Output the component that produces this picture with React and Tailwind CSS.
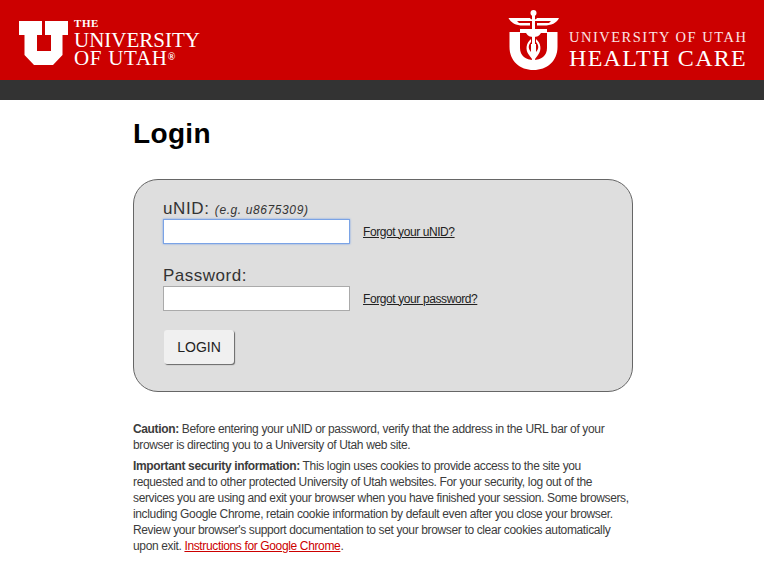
export default function App() {
  return (
    <div className="min-h-[571px] bg-white font-['Liberation_Sans',Arial,sans-serif] text-[#333]">
      <header className="h-[80px] bg-[#cc0000] flex items-start justify-between text-white font-['Liberation_Serif',serif]">
        <div className="flex pl-[19px] pt-[20px]">
          <svg width="49" height="45" viewBox="0 0 49 45" fill="#fff" className="block">
            <path d="M0 1H23V15H18V31H32V15H26V1H49V15H43.5V35L34 45H15L5.5 35V15H0Z" />
          </svg>
          <div className="ml-[6px] -mt-[3px]">
            <div className="text-[11px] leading-[12px] font-bold tracking-[0.6px]">THE</div>
            <div className="text-[21px] leading-[18px] mt-[2px] whitespace-nowrap">UNIVERSITY</div>
            <div className="text-[21px] leading-[18px] tracking-[0.7px] whitespace-nowrap">OF UTAH<span className="text-[10px] relative top-[-5px] leading-none font-bold">®</span></div>
          </div>
        </div>
        <div className="flex pr-[17px] pt-[10px]">
          <svg width="52" height="60" viewBox="0 0 52 60" fill="#fff" className="block">
            <circle cx="25.5" cy="3" r="3" />
            <path d="M0.5 8H22C23 10 28 10 29 8H51C49 13 43 15.5 36 15.5H29V13H41L43 11H9L11 13H22V15.5H15C8 15.5 3 13 0.5 8Z" />
            <path d="M24 5H27V52H24Z" />
            <path d="M1.5 22H12V38C12 46 18 50 25.5 50S39 46 39 38V22H49.5V37C49.5 51 39 60 25.5 60S1.5 51 1.5 37Z" />
            <path d="M12 19H39V23H33C31 26 29 27 25.5 27S20 26 18 23H12Z" />
            <path d="M23 29C18 33 17 40 21 45L25.5 51L30 45C34 40 33 33 28 29V32C31 35 31 39 28 42V34H23V42C20 39 20 35 23 32Z" />
          </svg>
          <div className="ml-[9px] pt-[20px] w-[178px]">
            <div className="text-[14.5px] leading-[15px] tracking-[1.5px] whitespace-nowrap text-[#fbe5e5]">UNIVERSITY OF UTAH</div>
            <div className="text-[24px] leading-[24px] tracking-[1.3px] whitespace-nowrap mt-[1px]">HEALTH CARE</div>
          </div>
        </div>
      </header>
      <div className="h-[20px] bg-[#333]" />
      <main className="w-[500px] ml-[133px]">
        <h1 className="text-[28px] leading-[32px] font-bold text-black pt-[18px] tracking-[0.35px]">Login</h1>
        <form className="mt-[29px] h-[213px] rounded-[25px] border border-[#666] bg-[#dedede] pl-[29px] pt-[20px]">
          <label className="block text-[17px] leading-[18px] tracking-[0.6px] text-[#333]">
            uNID: <em className="text-[12px] tracking-[0.6px]">(e.g. u8675309)</em>
          </label>
          <div className="flex items-center">
            <div className="w-[187px] h-[25px] bg-white border border-[#7aa3e6] shadow-[0_0_2px_#7aa3e6]" />
            <a className="ml-[13px] text-[12px] leading-[14px] underline tracking-[-0.42px] text-[#222]">Forgot your uNID?</a>
          </div>
          <label className="block mt-[21px] text-[17px] leading-[21px] tracking-[0.5px] text-[#333]">Password:</label>
          <div className="flex items-center">
            <div className="w-[187px] h-[25px] bg-white border border-[#aaa]" />
            <a className="ml-[13px] text-[12px] leading-[14px] underline tracking-[-0.4px] text-[#222]">Forgot your password?</a>
          </div>
          <button type="button" className="block ml-[1px] mt-[19px] w-[70px] h-[34px] rounded-[3px] bg-[#f0f0f0] text-[14px] text-[#222] shadow-[1px_1px_1px_#666]">LOGIN</button>
        </form>
        <div className="mt-[29px] text-[12px] leading-[16px] tracking-[-0.36px] text-[#3c3c3c]">
          <p><strong>Caution:</strong> Before entering your uNID or password, verify that the address in the URL bar of your browser is directing you to a University of Utah web site.</p>
          <p className="mt-[5px]"><strong>Important security information:</strong> This login uses cookies to provide access to the site you requested and to other protected University of Utah websites. For your security, log out of the services you are using and exit your browser when you have finished your session. Some browsers, including Google Chrome, retain cookie information by default even after you close your browser. Review your browser's support documentation to set your browser to clear cookies automatically upon exit. <a className="underline text-[#cc0000]">Instructions for Google Chrome</a>.</p>
        </div>
      </main>
    </div>
  );
}
